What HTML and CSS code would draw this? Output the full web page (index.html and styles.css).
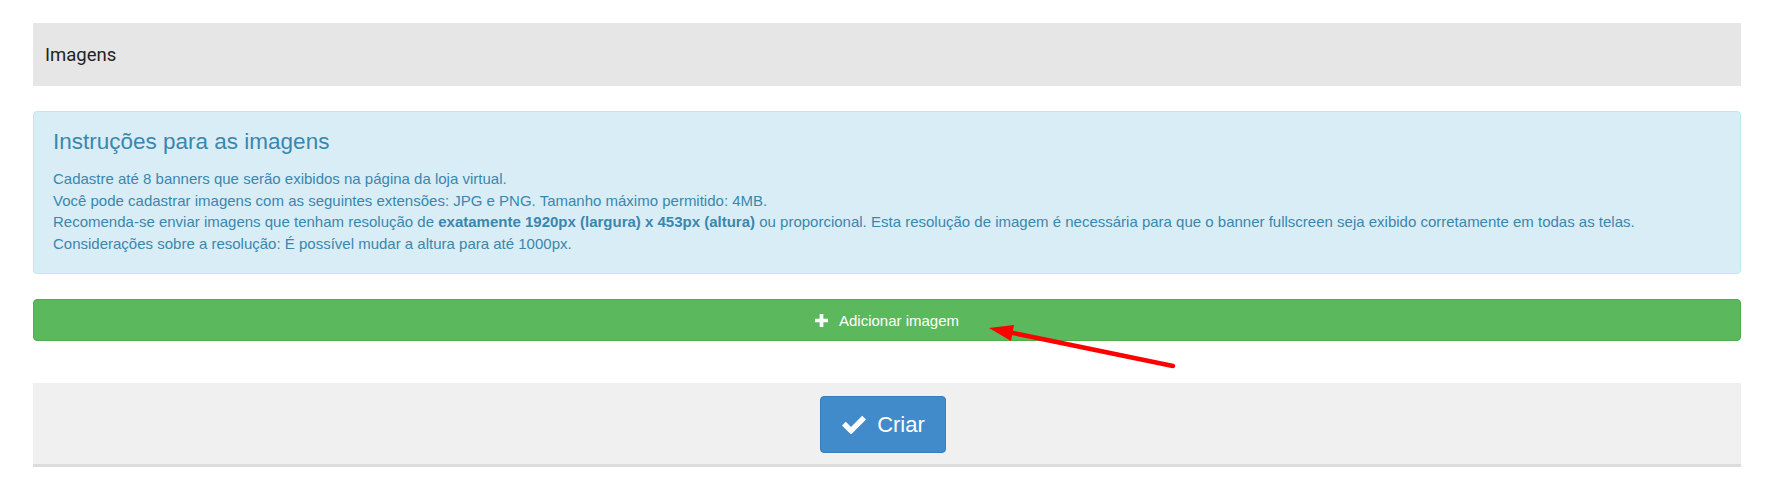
FILE: index.html
```html
<!DOCTYPE html>
<html lang="pt-BR">
<head>
  <meta charset="UTF-8">
  <title>Imagens</title>
  <meta name="viewport" content="width=device-width, initial-scale=1.0">
  <link rel="stylesheet" href="styles.css">
</head>
<body>
  <div class="page">
    <div class="panel-heading">Imagens</div>

    <div class="alert-info">
      <h3 class="alert-title">Instruções para as imagens</h3>
      <p>Cadastre até 8 banners que serão exibidos na página da loja virtual.</p>
      <p>Você pode cadastrar imagens com as seguintes extensões: JPG e PNG. Tamanho máximo permitido: 4MB.</p>
      <p>Recomenda-se enviar imagens que tenham resolução de <b>exatamente 1920px (largura) x 453px (altura)</b> ou proporcional. Esta resolução de imagem é necessária para que o banner fullscreen seja exibido corretamente em todas as telas.</p>
      <p>Considerações sobre a resolução: É possível mudar a altura para até 1000px.</p>
    </div>

    <button class="btn-add" type="button">
      <!-- glyphicon plus -->
      <svg class="icon-plus" viewBox="0 0 14 14">
        <path d="M5 0h4v5h5v4H9v5H5V9H0V5h5z" fill="#fff"/>
      </svg>
      Adicionar imagem
    </button>

    <div class="form-footer">
      <button class="btn-create" type="submit">
        <!-- glyphicon ok -->
        <svg class="icon-ok" viewBox="0 0 24 19">
          <path d="M0 10.5 L3.8 6.8 L9 12 L20.2 0.8 L24 4.6 L9 19.5 Z" fill="#fff"/>
        </svg>
        Criar
      </button>
    </div>
  </div>

  <!-- red annotation arrow drawn over the screenshot -->
  <svg class="annotation" viewBox="0 0 1773 492">
    <line x1="1173" y1="366" x2="1008" y2="332" stroke="#f00" stroke-width="4.5" stroke-linecap="round"/>
    <polygon points="989,328 1014,325 1011,341" fill="#f00"/>
  </svg>
</body>
</html>
```

FILE: styles.css
```css
body {
  margin: 0;
  background: #fff;
  font-family: 'Liberation Sans', Arial, sans-serif;
  font-size: 15px;
  color: #333;
  position: relative;
}

.page {
  display: flex;
  flex-direction: column;
  margin: 0 32px 0 33px;
  padding-top: 23px;
}

.panel-heading {
  height: 63px;
  display: flex;
  align-items: center;
  padding-left: 12px;
  background: #e6e6e6;
  font-family: Roboto, 'Liberation Sans', sans-serif;
  font-size: 18.5px;
  color: #222;
}

.alert-info {
  margin-top: 25px;
  padding: 16px 19px 19px 19px;
  background: #d9edf7;
  border: 1px solid #bce8f1;
  border-radius: 4px;
  color: #3a87ad;
}
.alert-title {
  margin: 0 0 13px 0;
  font-size: 22.5px;
  font-weight: 400;
  line-height: 27px;
}
.alert-info p {
  margin: 0;
  line-height: 21.6px;
}
.alert-info b {
  font-weight: 700;
}

.btn-add {
  margin-top: 25px;
  height: 42px;
  display: flex;
  align-items: center;
  justify-content: center;
  gap: 11px;
  background: #5cb85c;
  border: 1px solid #4cae4c;
  border-radius: 4px;
  color: #fff;
  font-family: 'Liberation Sans', Arial, sans-serif;
  font-size: 15px;
  padding: 0;
}
.icon-plus {
  width: 13px;
  height: 13px;
  display: block;
}

.form-footer {
  margin-top: 42px;
  padding: 13px 8px 11px 0;
  display: flex;
  justify-content: center;
  background: #f0f0f0;
  border-bottom: 3px solid #dcdcdc;
}

.btn-create {
  height: 57px;
  display: flex;
  align-items: center;
  gap: 11px;
  padding: 0 20px 0 21px;
  background: #428bca;
  border: 1px solid #357ebd;
  border-radius: 4px;
  color: #fff;
  font-family: 'Liberation Sans', Arial, sans-serif;
  font-size: 22px;
}
.icon-ok {
  width: 24px;
  height: 19px;
  display: block;
}

.annotation {
  position: absolute;
  left: 0;
  top: 0;
  width: 1773px;
  height: 492px;
  pointer-events: none;
}
```
